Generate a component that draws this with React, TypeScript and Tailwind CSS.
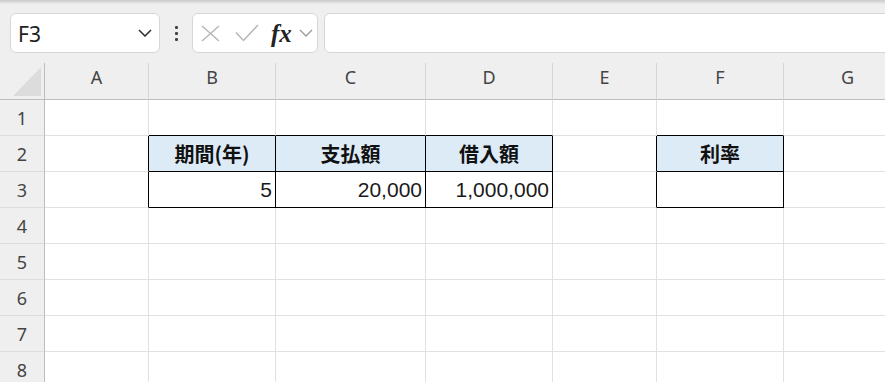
import React from "react";

const COLS = ["A", "B", "C", "D", "E", "F", "G"];
const ROWS = [1, 2, 3, 4, 5, 6, 7, 8];

const inT = (r: number, c: number) =>
  (r === 2 || r === 3) && ((c >= 1 && c <= 3) || c === 5);

const DATA: Record<string, string> = {
  "2-1": "期間(年)",
  "2-2": "支払額",
  "2-3": "借入額",
  "2-5": "利率",
  "3-1": "5",
  "3-2": "20,000",
  "3-3": "1,000,000",
};

function Cell({ r, c }: { r: number; c: number }) {
  const rb = inT(r, c) || inT(r, c + 1);
  const bb = inT(r, c) || inT(r + 1, c);
  const header = r === 2 && inT(r, c);
  const text = DATA[`${r}-${c}`];
  return (
    <div
      className={[
        "h-[36px] border-r border-b flex items-center",
        rb ? "border-r-black" : "border-r-[#e1e1e1]",
        bb ? "border-b-black" : "border-b-[#e1e1e1]",
        header ? "bg-[#ddebf7] justify-center" : "bg-white justify-end pr-[3px]",
      ].join(" ")}
    >
      {text && header && (
        <span className="font-['Noto_Sans_CJK_JP',sans-serif] font-bold text-[20px] leading-none text-[#111]">
          {text}
        </span>
      )}
      {text && !header && (
        <span className="font-['Liberation_Sans',sans-serif] text-[21px] leading-none text-[#1a1a1a]">
          {text}
        </span>
      )}
    </div>
  );
}

export default function App() {
  return (
    <div className="w-[885px] h-[382px] overflow-hidden bg-[#efefef] font-['Noto_Sans',sans-serif]">
      {/* toolbar */}
      <div className="h-[4px] bg-gradient-to-b from-[#c9c9c9] to-[#ececec]" />
      <div className="flex items-center h-[40px] mt-[9px] mb-[10px]">
        <div className="ml-[10px] w-[150px] h-[40px] rounded-[6px] border border-[#d6d6d6] bg-white flex items-center justify-between pl-[7px] pr-[6px]">
          <span className="text-[21px] leading-none text-[#222] font-['Noto_Sans',sans-serif] mt-[2px]">F3</span>
          <svg width="14" height="8" viewBox="0 0 14 8" className="mr-[1px]">
            <polyline points="1,1 7,7 13,1" fill="none" stroke="#333" strokeWidth="1.6" />
          </svg>
        </div>
        <div className="w-[32px] flex flex-col items-center gap-[3px]">
          <span className="w-[3px] h-[3px] bg-[#444] rounded-[1px]" />
          <span className="w-[3px] h-[3px] bg-[#444] rounded-[1px]" />
          <span className="w-[3px] h-[3px] bg-[#444] rounded-[1px]" />
        </div>
        <div className="w-[126px] h-[40px] rounded-[6px] border border-[#d6d6d6] bg-white flex items-center pl-[8px]">
          <svg width="19" height="17" viewBox="0 0 19 17">
            <path d="M1 1 L18 16 M18 1 L1 16" stroke="#b5b5b5" strokeWidth="1.4" fill="none" />
          </svg>
          <svg width="24" height="18" viewBox="0 0 24 18" className="ml-[15px]">
            <polyline points="1,8.5 8.5,16.5 23,1" stroke="#b5b5b5" strokeWidth="1.4" fill="none" />
          </svg>
          <span className="ml-[12px] font-['Liberation_Serif',serif] italic font-bold text-[25px] leading-none text-[#222] mt-[1px]">
            fx
          </span>
          <svg width="14" height="8" viewBox="0 0 14 8" className="ml-[7px]">
            <polyline points="1,1 7,7 13,1" fill="none" stroke="#999" strokeWidth="1.3" />
          </svg>
        </div>
        <div className="ml-[6px] flex-1 -mr-[10px] h-[40px] rounded-[6px] border border-[#d6d6d6] bg-white" />
      </div>

      {/* grid */}
      <div className="grid grid-cols-[45px_104px_127px_150px_127px_104px_127px_127px]">
        <div className="h-[37px] border-r border-b border-[#bdbdbd] flex items-end justify-end pr-[3px] pb-[3px]">
          <svg width="28" height="29" viewBox="0 0 28 29">
            <polygon points="28,0 28,29 0,29" fill="#dcdcdc" />
          </svg>
        </div>
        {COLS.map((c, i) => (
          <div
            key={c}
            className={[
              "h-[37px] border-b border-b-[#bdbdbd] flex justify-center pt-[4px] text-[18px] leading-[20px] text-[#444]",
              i < COLS.length - 1 ? "border-r border-r-[#d6d6d6]" : "",
            ].join(" ")}
          >
            {c}
          </div>
        ))}
        {ROWS.map((r) => (
          <React.Fragment key={r}>
            <div className="h-[36px] border-r border-r-[#bdbdbd] border-b border-b-[#dcdcdc] flex items-center justify-center text-[18px] leading-none text-[#444]">
              {r}
            </div>
            {COLS.map((_, c) => (
              <Cell key={c} r={r} c={c} />
            ))}
          </React.Fragment>
        ))}
      </div>
    </div>
  );
}
